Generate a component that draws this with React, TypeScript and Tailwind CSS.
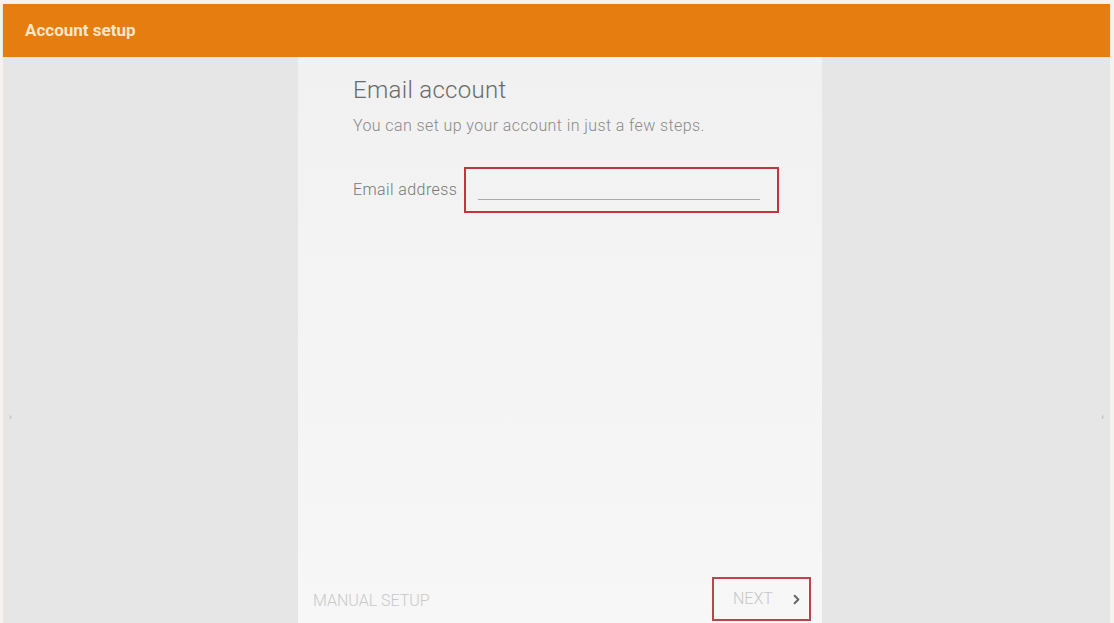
import { ChevronRight } from 'lucide-react'

export default function App() {
  return (
    <div className="h-[623px] w-full bg-[#f6f3ee] pt-[4px] pl-[3px] pr-[4px] flex flex-col font-['Roboto',sans-serif]">
      <header className="h-[53px] shrink-0 bg-[#e57d10] flex items-center pl-[22px] shadow-[0_1px_2px_rgba(0,0,0,0.15)]">
        <h1 className="text-[17px] font-bold text-[#fbe6c8] leading-none">Account setup</h1>
      </header>

      <main className="flex-1 flex bg-[#e6e6e6] min-h-0">
        <div className="w-[295px] flex items-start pt-[356px] pl-[6px]">
          <span className="text-[9px] text-[#aaa] leading-none">›</span>
        </div>

        <section className="w-[524px] flex flex-col bg-gradient-to-b from-[#f1f1f1] to-[#f7f7f7]">
          <div className="flex-1 pl-[55px] pt-[21px]">
            <h2 className="text-[24px] font-light text-[#6a6a6a] leading-none tracking-[0.3px]">Email account</h2>
            <p className="mt-[14px] text-[16px] leading-[20px] font-light text-[#8a8a8a] tracking-[0.4px]">
              You can set up your account in just a few steps.
            </p>
            <div className="mt-[31px] flex items-center">
              <label className="text-[16px] leading-[20px] font-light text-[#777] tracking-[0.4px] mr-[7px]">Email address</label>
              <div className="w-[315px] h-[46px] border-2 border-[#c4343c] flex items-end pl-[12px] pr-[17px] pb-[11px]">
                <div className="h-px w-full bg-[#a9a9a9]" />
              </div>
            </div>
          </div>

          <footer className="h-[46px] flex items-end justify-between pl-[15px] pr-[11px] pb-[2px]">
            <span className="mb-[10px] text-[16px] leading-[20px] font-light text-[#c8c8c8]">MANUAL SETUP</span>
            <div className="w-[99px] h-[44px] border-2 border-[#b9464c] flex items-center pl-[19px] gap-[16px]">
              <span className="text-[16px] leading-[20px] font-light text-[#c6c6c6]">NEXT</span>
              <ChevronRight size={15} strokeWidth={3.2} className="text-[#666]" />
            </div>
          </footer>
        </section>

        <div className="flex-1 flex items-start pt-[356px] justify-end pr-[6px]">
          <span className="text-[9px] text-[#aaa] leading-none">‹</span>
        </div>
      </main>
    </div>
  )
}
